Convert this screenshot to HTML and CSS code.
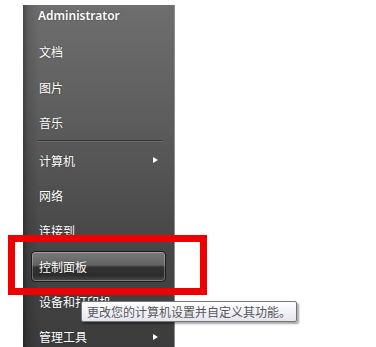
FILE: index.html
```html
<!DOCTYPE html>
<html lang="zh-CN">
<head>
    <meta charset="UTF-8">
    <meta name="viewport" content="width=device-width, initial-scale=1.0">
    <title>开始菜单</title>
    <link rel="stylesheet" href="styles.css">
</head>
<body>
    <div class="menu">
        <div class="user">Administrator</div>
        <div class="item"><span>文档</span></div>
        <div class="item"><span>图片</span></div>
        <div class="item"><span>音乐</span></div>
        <div class="separator"></div>
        <div class="item"><span>计算机</span><i class="arrow"></i></div>
        <div class="item"><span>网络</span></div>
        <div class="item"><span>连接到</span></div>
        <div class="item active"><span>控制面板</span></div>
        <div class="item"><span>设备和打印机</span></div>
        <div class="item"><span>管理工具</span><i class="arrow"></i></div>
    </div>

    <!-- annotation + tooltip overlays -->
    <div class="highlight-box"></div>
    <div class="tooltip">更改您的计算机设置并自定义其功能。</div>
</body>
</html>
```

FILE: styles.css
```css
body {
    margin: 0;
    background-color: #ffffff;
    font-family: "Noto Sans", "Noto Sans CJK SC", sans-serif;
    height: 347px;
    overflow: hidden;
    position: relative;
}
.menu {
    display: flex;
    flex-direction: column;
    margin-left: 23px;
    margin-top: 5px;
    width: 152px;
    height: 342px;
    border-right: 1px solid #8c8c8c;
    background:
        linear-gradient(to right, rgba(0, 0, 0, 0.35) 0, rgba(0, 0, 0, 0.12) 5px, rgba(0, 0, 0, 0) 16px),
        linear-gradient(to bottom, #6e6e6e 0, #5c5c5c 120px, #484848 230px, #3c3c3c 100%);
    box-sizing: border-box;
}
.user {
    flex-shrink: 0;
    height: 22px;
    line-height: 22px;
    padding-left: 15px;
    color: #ffffff;
    font-size: 12px;
    font-weight: 600;
    margin-bottom: 7.3px;
    text-shadow: 0 0 2px rgba(0, 0, 0, 0.4);
}
.item {
    flex-shrink: 0;
    height: 31px;
    margin: 2.2px 8px;
    padding-left: 7px;
    padding-right: 7px;
    display: flex;
    align-items: center;
    justify-content: space-between;
    color: #ffffff;
    font-size: 12px;
    font-family: "Noto Sans CJK SC", sans-serif;
    border: 1px solid transparent;
    border-radius: 4px;
    box-sizing: border-box;
    text-shadow: 0 0 2px rgba(0, 0, 0, 0.4);
}
.item.active {
    border-color: #1c1c1c;
    background: linear-gradient(to bottom, #7a7a7a 0, #626262 45%, #333333 52%, #2c2c2c 80%, #4a4a4a 100%);
    box-shadow: inset 0 0 0 1px rgba(255, 255, 255, 0.28);
}
.arrow {
    width: 0;
    height: 0;
    border-left: 5px solid #ffffff;
    border-top: 3.5px solid transparent;
    border-bottom: 3.5px solid transparent;
}
.separator {
    flex-shrink: 0;
    height: 1px;
    margin: 0 12px 0 15px;
    background-color: #353535;
    border-bottom: 1px solid #6c6c6c;
}
.highlight-box {
    position: absolute;
    left: 8px;
    top: 235px;
    width: 199px;
    height: 60px;
    border: 7.5px solid #ee0000;
    box-sizing: border-box;
}
.tooltip {
    position: absolute;
    left: 81px;
    top: 301px;
    width: 216px;
    height: 21px;
    box-sizing: border-box;
    padding-left: 5px;
    line-height: 19px;
    font-size: 12px;
    font-family: "Noto Sans CJK SC", sans-serif;
    color: #575757;
    border: 1px solid #767676;
    border-radius: 2px;
    background: linear-gradient(to bottom, #ffffff 0, #e4e5f0 100%);
    box-shadow: 2px 2px 2px rgba(0, 0, 0, 0.35);
    white-space: nowrap;
}
```
